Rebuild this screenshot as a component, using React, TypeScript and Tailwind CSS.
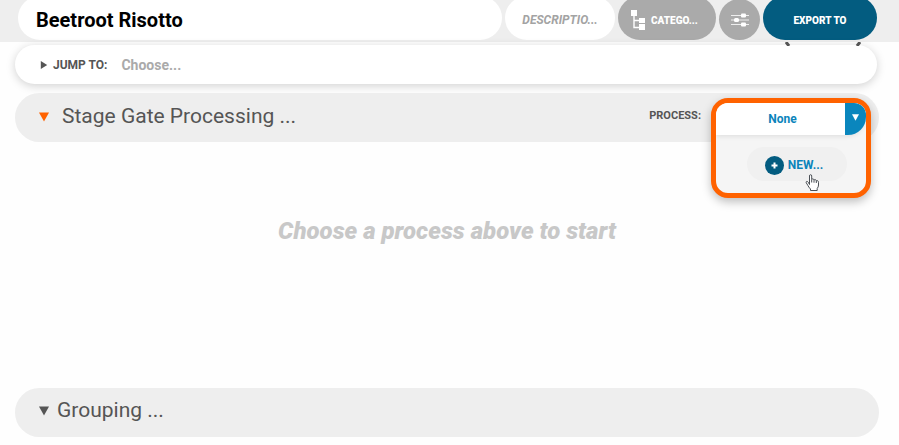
import React, { useState } from 'react';

const Triangle: React.FC<{ className: string; right?: boolean }> = ({ className, right }) => (
  <svg viewBox="0 0 10 10" className={className} fill="currentColor" aria-hidden="true">
    <path d={right ? 'M1 0 L9 5 L1 10 Z' : 'M0 0.5 H10 L5 9.5 Z'} />
  </svg>
);

const TreeIcon: React.FC = () => (
  <svg width="16" height="22" viewBox="0 0 16 22" className="shrink-0" fill="white" aria-hidden="true">
    <rect x="0" y="1" width="6" height="6" />
    <rect x="8" y="9" width="6" height="5" />
    <rect x="8" y="15" width="6" height="6" />
    <path d="M3 6 V18.5 H9 M3 11.5 H9" fill="none" stroke="white" strokeWidth="1.4" />
  </svg>
);

const SlidersIcon: React.FC = () => (
  <svg width="20" height="16" viewBox="0 0 20 16" fill="white" aria-hidden="true">
    <path d="M1 3.5 H19 M1 8 H19 M1 12.5 H19" stroke="white" strokeWidth="1" opacity="0.8" />
    <rect x="11" y="1.5" width="5" height="4" rx="1" />
    <rect x="4" y="6" width="5" height="4" rx="1.5" />
    <rect x="11" y="10.5" width="5" height="4" rx="1" />
  </svg>
);

const HandCursor: React.FC = () => (
  <svg
    width="15"
    height="18"
    viewBox="0 0 15 18"
    className="pointer-events-none absolute top-[27px] left-[58px]"
    fill="white"
    stroke="#4a4f55"
    strokeWidth="1"
    strokeLinejoin="round"
    aria-hidden="true"
  >
    <path d="M4.5 10.5 V2 Q4.5 0.7 5.6 0.7 Q6.7 0.7 6.7 2 V5.5 Q7.2 4.6 8.1 5 Q9 5.2 9 6.2 Q9.6 5.3 10.5 5.7 Q11.3 6 11.3 7 Q12 6.3 12.8 6.8 Q13.5 7.2 13.5 8.3 V11 Q13.5 13 12.2 14.5 V16.5 H5.5 V15 Q3.5 13 2.8 11.3 L1.2 8.7 Q0.9 7.6 1.8 7.4 Q2.6 7.3 3.2 8.2 Z" />
    <path d="M6.7 5.5 V8.5 M9 6.2 V8.7 M11.3 7 V9" fill="none" />
  </svg>
);

const ProcessPicker: React.FC = () => {
  const [open, setOpen] = useState(true);

  return (
    <div className="absolute top-[5px] right-2 z-10 w-[160px] overflow-hidden rounded-[17px] border-[5px] border-[#ff6200] bg-[#f5f5f5] shadow-[0_4px_10px_rgba(0,0,0,0.25)]">
      <button
        id="process"
        type="button"
        aria-haspopup="menu"
        aria-expanded={open}
        onClick={() => setOpen(!open)}
        className="flex h-8 w-full items-stretch rounded-br-[20px] bg-white text-xs font-bold text-[#0b84bb] shadow-[0_2px_4px_rgba(0,0,0,0.08)]"
      >
        <span className="flex flex-1 items-center justify-center pl-1">None</span>
        <span className="flex w-[21px] items-center justify-center rounded-br-[18px] bg-[#0a86bd] pb-1 text-white">
          <Triangle className="h-[7px] w-[7px]" />
        </span>
      </button>
      {open && (
        <div role="menu" className="flex h-[58px] items-center justify-center pl-3">
          <button
            type="button"
            role="menuitem"
            className="relative flex h-[34px] w-[100px] items-center justify-center gap-1 rounded-full bg-[#f0f0f0] pt-[2px] pr-[6px] text-xs font-bold text-[#0b84bb]"
          >
            <svg width="19" height="19" viewBox="0 0 19 19" aria-hidden="true">
              <circle cx="9.5" cy="9.5" r="9.5" fill="#035c80" />
              <path d="M9.5 6.5 V12.5 M6.5 9.5 H12.5" stroke="white" strokeWidth="2" />
            </svg>
            NEW...
            <HandCursor />
          </button>
        </div>
      )}
    </div>
  );
};

const App: React.FC = () => {
  const [title, setTitle] = useState('Beetroot Risotto');
  const [description, setDescription] = useState('');
  const [jump, setJump] = useState('');

  return (
    <div className="min-h-screen bg-[#fefefe] font-[Roboto,sans-serif] text-[#555]">
      <header className="flex h-[42px] items-end gap-[3px] overflow-hidden bg-[#eee] pr-[22px] pb-[2px] pl-[18px]">
        <input
          aria-label="Title"
          value={title}
          onChange={(e) => setTitle(e.target.value)}
          className="h-11 min-w-0 flex-1 rounded-full bg-white px-[18px] pt-1 text-xl font-bold text-black outline-none"
        />
        <input
          aria-label="Description"
          value={description}
          onChange={(e) => setDescription(e.target.value)}
          placeholder="DESCRIPTIO..."
          className="h-11 w-[110px] rounded-full bg-white pt-1 text-center text-xs font-bold italic outline-none placeholder:text-[#a3a3a3]"
        />
        <button
          type="button"
          className="flex h-11 w-[98px] items-center gap-1 rounded-full bg-[#aaa] pt-1 pl-[13px] text-[10px] font-black text-white"
        >
          <TreeIcon />
          CATEGO...
        </button>
        <button
          type="button"
          aria-label="Settings"
          className="flex h-[41px] w-[41px] items-center justify-center rounded-full bg-[#aaa]"
        >
          <SlidersIcon />
        </button>
        <button
          type="button"
          className="h-11 w-[114px] rounded-full bg-[#035c80] pt-1 text-[10px] font-black text-white"
        >
          EXPORT TO
        </button>
      </header>

      <main className="flex flex-col pr-5 pl-[15px]">
        <div className="relative mt-[3px] mr-[2px] flex h-[39px] items-center rounded-full bg-white pl-[25px] shadow-[0_2px_10px_rgba(0,0,0,0.18)]">
          <svg width="76" height="4" viewBox="0 0 76 4" className="absolute -top-[3px] right-4" aria-hidden="true">
            <path d="M1 0 L4 4 M75 0 L72 4" stroke="#555" strokeWidth="3" />
          </svg>
          <Triangle right className="h-2 w-2" />
          <label htmlFor="jump" className="ml-[5px] text-xs font-bold">
            JUMP TO:
          </label>
          <input
            id="jump"
            value={jump}
            onChange={(e) => setJump(e.target.value)}
            placeholder="Choose..."
            className="ml-[14px] min-w-0 flex-1 bg-transparent text-sm font-bold outline-none placeholder:text-[#aaa]"
          />
        </div>

        <section>
          <div className="relative mt-[9px] flex h-[49px] items-center rounded-full bg-[#eee] pb-[2px] pl-6">
            <Triangle className="h-[10px] w-[10px] text-[#ff6200]" />
            <h2 className="ml-[13px] text-[21px]">Stage Gate Processing ...</h2>
            <label htmlFor="process" className="mr-[178px] ml-auto text-[11px] font-bold">
              PROCESS:
            </label>
            <ProcessPicker />
          </div>
          <p className="flex h-[246px] items-start justify-center pt-[73px] text-2xl font-black italic text-[#c8c8c8]">
            Choose a process above to start
          </p>
        </section>

        <section className="flex h-[49px] items-center rounded-full bg-[#eee] pb-1 pl-6">
          <Triangle className="h-[10px] w-[10px]" />
          <h2 className="ml-2 text-[21px]">Grouping ...</h2>
        </section>
      </main>
    </div>
  );
};

export default App;
